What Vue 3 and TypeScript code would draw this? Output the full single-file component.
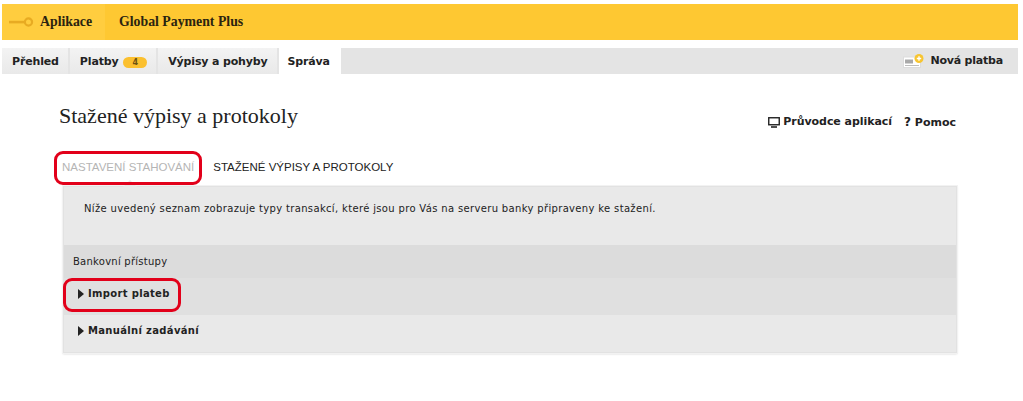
<template>
  <div class="page">
    <header class="app-bar">
      <div class="app-bar__apps">
        <svg class="key" width="26" height="10" viewBox="0 0 26 10">
          <path d="M1 3.8h16.5v2.6H1z" fill="#e8ab22" />
          <circle cx="20.5" cy="5" r="3.6" fill="none" stroke="#e8ab22" stroke-width="2.2" />
        </svg>
        Aplikace
      </div>
      <div class="app-bar__title">Global Payment Plus</div>
    </header>

    <nav class="tabs">
      <a v-for="tab in tabs" :key="tab.name" class="tab" :class="{ 'tab--active': tab.active }">
        {{ tab.name }}
        <span v-if="tab.count" class="tab__badge">{{ tab.count }}</span>
      </a>
      <a class="new-payment">
        <svg width="21" height="14" viewBox="0 0 21 14">
          <rect x="0.5" y="3" width="17" height="10.5" fill="#fff" stroke="#dcdcdc" />
          <rect x="2" y="5.5" width="8" height="4" fill="#a9a9a9" />
          <path d="M2 11.5h14" stroke="#bdbdbd" />
          <circle cx="16" cy="4.5" r="4.5" fill="#f7c531" />
          <path d="M16 2.3v4.4M13.8 4.5h4.4" stroke="#fff" stroke-width="1.4" />
        </svg>
        Nová platba
      </a>
    </nav>

    <main class="content">
      <div class="content__head">
        <h1>Stažené výpisy a protokoly</h1>
        <div class="help-links">
          <a class="help-links__guide">
            <svg width="12" height="11" viewBox="0 0 12 11">
              <rect x="0.75" y="0.75" width="10.5" height="7" fill="none" stroke="#222" stroke-width="1.4" />
              <path d="M3 10h6" stroke="#222" stroke-width="1.6" />
            </svg>
            Průvodce aplikací
          </a>
          <a><b class="help-links__q">?</b> Pomoc</a>
        </div>
      </div>

      <div class="sub-tabs">
        <a class="sub-tab sub-tab--active">NASTAVENÍ STAHOVÁNÍ<i class="mark mark--tab"></i></a>
        <a class="sub-tab">STAŽENÉ VÝPISY A PROTOKOLY</a>
      </div>

      <section class="panel">
        <p class="panel__intro">Níže uvedený seznam zobrazuje typy transakcí, které jsou pro Vás na serveru banky připraveny ke stažení.</p>
        <div class="panel__caption">Bankovní přístupy</div>
        <div class="row row--dark">
          <i class="row__arrow"></i>Import plateb<i class="mark mark--row"></i>
        </div>
        <div class="row">
          <i class="row__arrow"></i>Manuální zadávání
        </div>
      </section>
    </main>
  </div>
</template>

<script setup lang="ts">
const tabs = [
  { name: 'Přehled' },
  { name: 'Platby', count: 4 },
  { name: 'Výpisy a pohyby' },
  { name: 'Správa', active: true },
]
</script>

<style>
body {
  background: #fff;
}
</style>

<style scoped>
.page {
  width: 1023px;
  height: 401px;
  overflow: hidden;
  padding: 4px 5px 0 2px;
  box-sizing: border-box;
  font-family: "DejaVu Sans", Verdana, sans-serif;
  font-size: 11px;
  color: #222;
}

.app-bar {
  display: flex;
  height: 36px;
  background: #fec832;
  font-family: "Liberation Serif", serif;
  font-size: 13.8px;
  font-weight: 700;
  line-height: 36px;
  color: #2b2410;
}

.app-bar__apps {
  display: flex;
  align-items: center;
  gap: 6px;
  width: 103px;
  padding-left: 6px;
  box-sizing: border-box;
  background: #ffcd3f;
}

.app-bar__title {
  margin-left: 14px;
}

.tabs {
  display: flex;
  align-items: stretch;
  gap: 2px;
  height: 26px;
  margin-top: 8px;
  background: #e4e4e4;
  line-height: 28px;
  font-weight: 700;
  letter-spacing: -0.15px;
}

.tab {
  padding: 0 9px 0 10px;
  background: linear-gradient(#f3f3f3, #e9e9e9);
}

.tab--active {
  padding: 0 11px 0 9px;
  background: #fff;
}

.tab__badge {
  display: inline-block;
  width: 24px;
  height: 11px;
  margin-left: 1px;
  border-radius: 6px;
  background: #fbc02f;
  font-size: 8px;
  line-height: 11px;
  text-align: center;
  color: #6b5312;
}

.new-payment {
  display: flex;
  align-items: center;
  gap: 6px;
  margin-left: auto;
  padding-right: 15px;
  line-height: 26px;
  letter-spacing: -0.2px;
}

.content {
  padding: 0 62px 0 57px;
}

.content__head {
  display: flex;
  justify-content: space-between;
  align-items: center;
  margin-top: 27px;
}

h1 {
  margin: 0;
  font-family: "Liberation Serif", serif;
  font-size: 22px;
  font-weight: 400;
  line-height: 29px;
  color: #222;
}

.help-links {
  display: flex;
  gap: 12px;
  margin-top: 12px;
  font-weight: 700;
}

.help-links__guide {
  display: inline-flex;
  align-items: center;
  gap: 3px;
  letter-spacing: -0.05px;
}

.help-links__guide svg {
  margin-top: 2px;
}

.help-links__q {
  font-size: 12px;
}

.sub-tabs {
  display: flex;
  gap: 19px;
  margin-top: 28px;
  padding-left: 3px;
  font-family: "Liberation Sans", Arial, sans-serif;
  font-size: 11.5px;
  line-height: 18px;
}

.sub-tab {
  position: relative;
}

.sub-tab--active {
  color: #b5b5b5;
}

.sub-tab--active::after {
  content: '';
  position: absolute;
  left: 61px;
  bottom: -11px;
  border: 7px solid transparent;
  border-bottom-color: #e9e9e9;
  border-top: 0;
}

.mark {
  position: absolute;
  box-sizing: border-box;
  border: 3px solid #e2001a;
  border-radius: 9px;
  z-index: 2;
}

.mark--tab {
  left: -8px;
  top: -7px;
  width: 148px;
  height: 34px;
}

.panel {
  margin: 10px 0 0 4px;
  width: 894px;
  background: #e9e9e9;
  border: 1px solid #e2e2e2;
  box-sizing: border-box;
  box-shadow: 0 0 0 1px #f2f2f2, 0 1px 2px #d0d0d0;
  color: #222;
}

.panel__intro {
  height: 58px;
  margin: 0;
  padding: 15px 0 0 20px;
  box-sizing: border-box;
  font-size: 10px;
  line-height: 14px;
  letter-spacing: 0.34px;
}

.panel__caption {
  height: 33px;
  padding-left: 9px;
  background: #dcdcdc;
  font-size: 10px;
  line-height: 34px;
  letter-spacing: 0.25px;
}

.row {
  position: relative;
  display: flex;
  align-items: center;
  height: 37px;
  padding: 0 0 6px 14px;
  box-sizing: border-box;
  font-size: 10px;
  font-weight: 700;
  letter-spacing: 0.33px;
}

.row--dark {
  background: #e0e0e0;
}

.row__arrow {
  width: 0;
  height: 0;
  margin-right: 4px;
  border-style: solid;
  border-width: 5px 0 5px 6px;
  border-color: transparent transparent transparent #222;
}

.mark--row {
  left: -1px;
  top: 0;
  width: 118px;
  height: 34px;
}
</style>
